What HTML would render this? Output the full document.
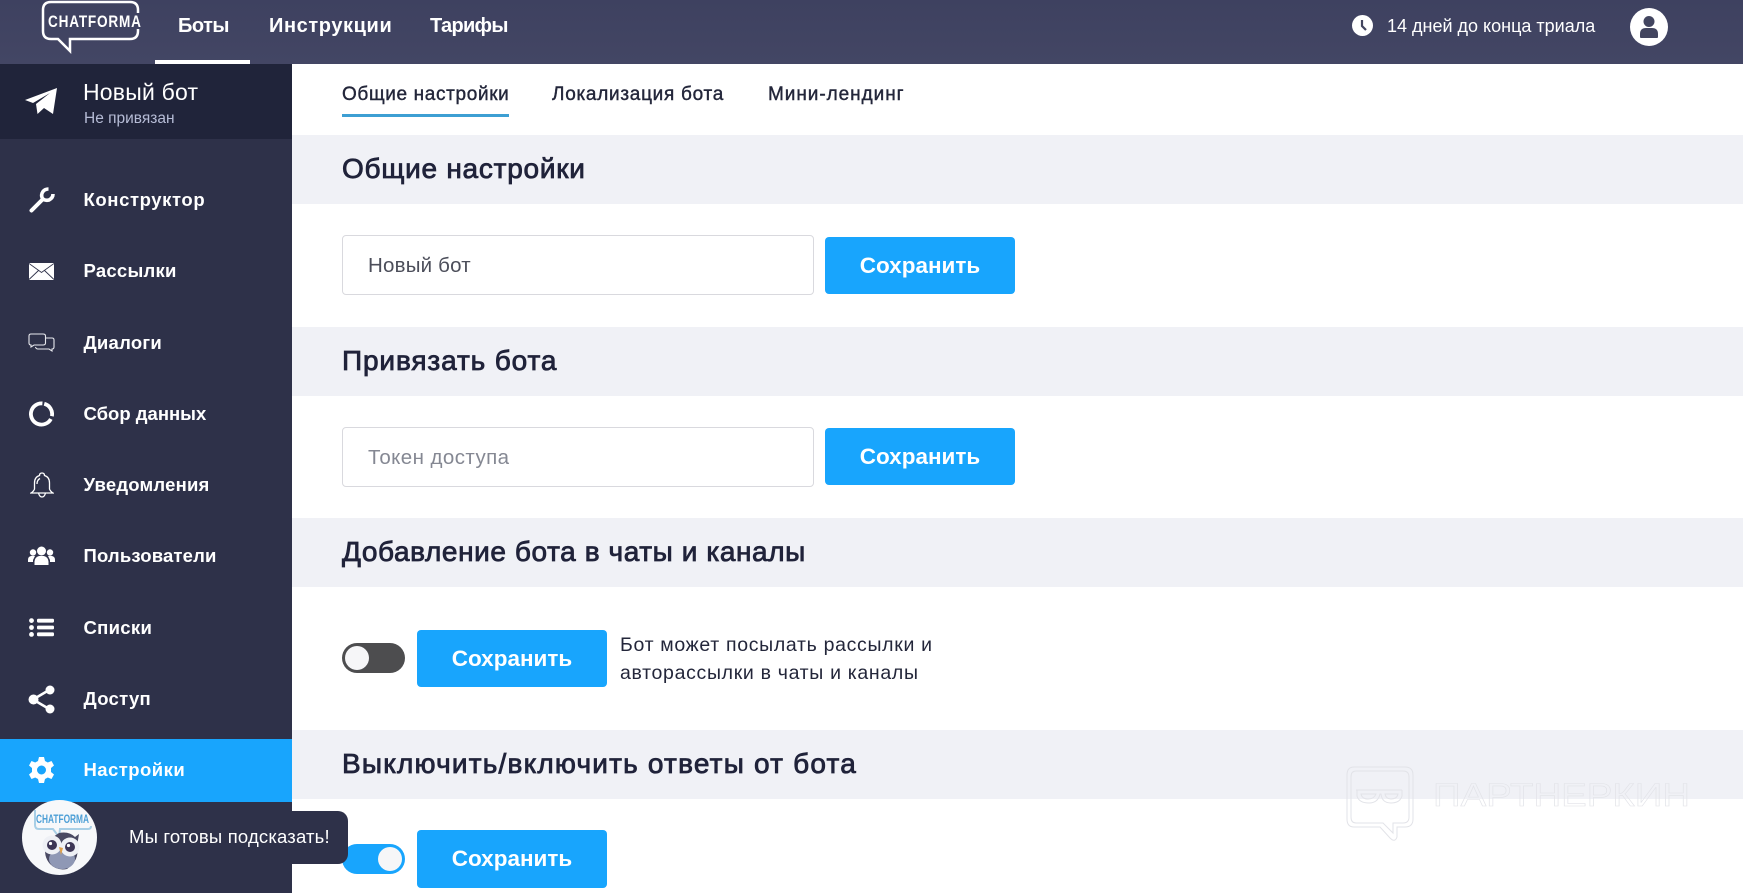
<!DOCTYPE html>
<html lang="ru"><head><meta charset="utf-8"><title>Chatforma</title>
<style>
*{box-sizing:border-box;margin:0;padding:0}
html,body{width:1743px;height:893px;overflow:hidden;background:#fff;font-family:"Liberation Sans",sans-serif}
.a{position:absolute;white-space:nowrap}
.nav{color:#fff;font-weight:700;font-size:20px;line-height:24px;top:14px}
.side{color:#fff;font-weight:700;font-size:18.5px;line-height:24px;left:83.5px}
.tab{color:#23263a;font-size:19px;line-height:22px;top:84px;-webkit-text-stroke:.4px #23263a}
.band{left:292px;width:1451px;height:69px;background:#f0f1f6}
.h{left:342px;color:#20233a;font-size:28px;line-height:32px;-webkit-text-stroke:.8px #20233a}
.inp{left:342px;width:472px;height:60px;background:#fff;border:1px solid #d9d9de;border-radius:4px}
.it{left:368px;font-size:20.5px;line-height:24px}
.btn{background:#18a5fd;border-radius:4px;width:190px;color:#fff;font-weight:700;font-size:22.5px;text-align:center}
.tg{left:342px;width:63px;height:30px;border-radius:15px}
.kn{position:absolute;top:3px;width:24px;height:24px;border-radius:50%;background:#f6f6f8}
</style></head><body>
<div class="a" style="left:0;top:0;width:1743px;height:64px;background:linear-gradient(#3e4160,#434664)"></div>
<svg class="a" style="left:41px;top:0" width="104" height="56" viewBox="0 0 104 56"><path d="M97 13V10Q97 2 89 2H10Q2 2 2 10V31Q2 39 10 39H17L29 51V39H89Q97 39 97 31V29" fill="none" stroke="#fff" stroke-width="2.5"/><text transform="translate(7 27) scale(.8 1)" font-family="Liberation Sans" font-weight="700" font-size="17" fill="#fff" letter-spacing="1">CHATFORMA</text></svg>
<div class="a" style="left:155px;top:60px;width:95px;height:4px;background:#fff"></div>
<div class="a nav" style="left:178px;letter-spacing:-.5px">Боты</div>
<div class="a nav" style="left:269px;letter-spacing:.6px">Инструкции</div>
<div class="a nav" style="left:430px;letter-spacing:-.7px">Тарифы</div>
<svg class="a" style="left:1352px;top:15px" width="21" height="21" viewBox="0 0 21 21"><circle cx="10.5" cy="10.5" r="10.5" fill="#fff"/><path d="M10 5v6l4 4" fill="none" stroke="#42455f" stroke-width="2.2"/></svg>
<div class="a" style="left:1387px;top:15px;color:#fff;font-size:18px;line-height:22px">14 дней до конца триала</div>
<svg class="a" style="left:1630px;top:8px" width="38" height="38" viewBox="0 0 38 38"><circle cx="19" cy="19" r="19" fill="#fff"/><circle cx="19" cy="13.5" r="5.5" fill="#42455f"/><path d="M10 29v-3q0-6 6-6h6q6 0 6 6v3q0 1-1 1H11q-1 0-1-1z" fill="#42455f"/></svg>

<div class="a" style="left:0;top:64px;width:292px;height:829px;background:#2e3149"></div>
<div class="a" style="left:0;top:64px;width:292px;height:75px;background:#20243a"></div>
<svg class="a" style="left:25px;top:88px" width="32" height="28" viewBox="0 0 32 28"><path d="M0 12L32 0L28 26L19 20L12.5 26L11 16L25 5L8 15Z" fill="#fff"/></svg>
<div class="a" style="left:83px;top:78px;color:#fff;font-size:23px;letter-spacing:.2px;line-height:28px">Новый бот</div>
<div class="a" style="left:84px;top:110px;color:#b6bcd6;font-size:15.5px;line-height:18px">Не привязан</div>

<svg class="a" style="left:28px;top:187px" width="27" height="27" viewBox="0 0 27 27" fill="none" stroke="#fff" stroke-linecap="round"><path d="M3.5 23.5L14 13" stroke-width="4"/><path d="M25 7Q25 11 21 13Q17 14 14.5 11.5Q12.5 8 15 4.5Q17 2 20.5 2" stroke-width="3.6" stroke-linecap="butt"/></svg>
<div class="a side" style="top:188px;letter-spacing:.6px">Конструктор</div>
<svg class="a" style="left:29px;top:263px" width="25" height="17" viewBox="0 0 25 17"><rect width="25" height="17" fill="#fff"/><path d="M0 .5L12.5 9.5L25 .5M0 16.5L9.5 7.5M25 16.5L15.5 7.5" fill="none" stroke="#2e3149" stroke-width=".9"/></svg>
<div class="a side" style="top:259px;letter-spacing:.25px">Рассылки</div>
<svg class="a" style="left:28px;top:333px" width="27" height="20" viewBox="0 0 27 20" fill="none" stroke="#e8e9ee" stroke-width="1.1"><path d="M3 1H15Q17.5 1 17.5 3V10Q17.5 12 15 12H6L3 14V12Q1 12 1 10V3Q1 1 3 1Z"/><path d="M18 5H24Q26 5 26 7V14Q26 16 24 16V18L21 16H10Q8 16 7.5 14"/></svg>
<div class="a side" style="top:331px;letter-spacing:.25px">Диалоги</div>
<svg class="a" style="left:29px;top:401px" width="25" height="26" viewBox="0 0 25 26" fill="none" stroke="#fff" stroke-width="3.8"><path d="M15.24 2.76A10.6 10.6 0 0 1 22.87 15.2M21.86 17.98A10.6 10.6 0 1 1 13.42 2.44"/></svg>
<div class="a side" style="top:402px">Сбор данных</div>
<svg class="a" style="left:30px;top:472px" width="24" height="26" viewBox="0 0 24 26" fill="none" stroke="#fff" stroke-width="1.3"><path d="M12 1Q9.5 1 9.5 3.5Q4.5 5 4.5 11V17Q4 19 1 21H23Q20 19 19.5 17V11Q19.5 5 14.5 3.5Q14.5 1 12 1Z"/><path d="M8.5 21Q9.5 25 12 25Q14.5 25 15.5 21"/><path d="M7 12Q7 8 10 6.5"/></svg>
<div class="a side" style="top:473px;letter-spacing:.2px">Уведомления</div>
<svg class="a" style="left:28px;top:546px" width="27" height="19" viewBox="0 0 27 19" fill="#fff"><circle cx="13.5" cy="5" r="4.5"/><path d="M6.5 19V15.5Q7 11 11 10H16Q20 11 20.5 15.5V19Z"/><circle cx="5" cy="6.5" r="3.2"/><path d="M0 16V14Q0 10.5 3 10H7L5 14V16Z"/><circle cx="22" cy="6.5" r="3.2"/><path d="M27 16V14Q27 10.5 24 10H20L22 14V16Z"/></svg>
<div class="a side" style="top:544px;letter-spacing:.15px">Пользователи</div>
<svg class="a" style="left:29px;top:618px" width="25" height="19" viewBox="0 0 25 19" fill="#fff"><circle cx="2.5" cy="2.6" r="2.4"/><circle cx="2.5" cy="9.5" r="2.4"/><circle cx="2.5" cy="16.4" r="2.4"/><rect x="8" y=".8" width="17" height="3.8" rx="1.2"/><rect x="8" y="7.6" width="17" height="3.8" rx="1.2"/><rect x="8" y="14.4" width="17" height="3.8" rx="1.2"/></svg>
<div class="a side" style="top:616px;letter-spacing:.3px">Списки</div>
<svg class="a" style="left:28px;top:685px" width="27" height="29" viewBox="0 0 27 29" fill="#fff"><path d="M5 14.5L22 4.5M5 14.5L22 24.5" stroke="#fff" stroke-width="2.6"/><circle cx="5.5" cy="14.5" r="5"/><circle cx="22" cy="5" r="4.5"/><circle cx="22" cy="24" r="4.5"/></svg>
<div class="a side" style="top:687px;letter-spacing:.3px">Доступ</div>
<div class="a" style="left:0;top:739px;width:292px;height:63px;background:#18a5fd"></div>
<svg class="a" style="left:29px;top:757px" width="25" height="26" viewBox="0 0 25 26"><path fill="#fff" fill-rule="evenodd" d="M10 0H15L16 4L18.8 5.5L22.5 4L25 8.5L22 11V15L25 17.5L22.5 22L18.8 20.5L16 22L15 26H10L9 22L6.2 20.5L2.5 22L0 17.5L3 15V11L0 8.5L2.5 4L6.2 5.5L9 4ZM12.5 8.5A4.5 4.5 0 1 0 12.5 17.5A4.5 4.5 0 1 0 12.5 8.5Z"/></svg>
<div class="a side" style="top:758px;letter-spacing:.45px">Настройки</div>

<div class="a tab" style="left:342px;letter-spacing:.65px">Общие настройки</div>
<div class="a" style="left:342px;top:114px;width:167px;height:3px;background:#3d9fd3"></div>
<div class="a tab" style="left:552px;letter-spacing:.72px">Локализация бота</div>
<div class="a tab" style="left:768px;letter-spacing:.95px">Мини-лендинг</div>

<div class="a band" style="top:135px"></div>
<div class="a h" style="top:153px;letter-spacing:.75px">Общие настройки</div>
<div class="a inp" style="top:235px"></div>
<div class="a it" style="top:254px;color:#4c4e5a;letter-spacing:.2px">Новый бот</div>
<div class="a btn" style="left:825px;top:237px;height:57px;line-height:57px">Сохранить</div>

<div class="a band" style="top:327px"></div>
<div class="a h" style="top:345px;letter-spacing:.87px">Привязать бота</div>
<div class="a inp" style="top:427px"></div>
<div class="a it" style="top:446px;color:#858893;letter-spacing:.43px">Токен доступа</div>
<div class="a btn" style="left:825px;top:428px;height:57px;line-height:57px">Сохранить</div>

<div class="a band" style="top:518px"></div>
<div class="a h" style="top:536px;letter-spacing:.59px">Добавление бота в чаты и каналы</div>
<div class="a tg" style="top:643px;background:#4d4d4f"><div class="kn" style="left:3px"></div></div>
<div class="a btn" style="left:417px;top:630px;height:57px;line-height:57px">Сохранить</div>
<div class="a" style="left:620px;top:631px;color:#23263a;font-size:19.5px;letter-spacing:.68px;line-height:28px">Бот может посылать рассылки и<br>авторассылки в чаты и каналы</div>

<div class="a band" style="top:730px"></div>
<div class="a h" style="top:748px;letter-spacing:1.2px">Выключить/включить ответы от бота</div>
<div class="a tg" style="top:844px;background:#18a5fd"><div class="kn" style="left:36px"></div></div>
<div class="a btn" style="left:417px;top:830px;height:58px;line-height:58px">Сохранить</div>

<svg class="a" style="left:1345px;top:765px" width="350" height="78" viewBox="0 0 350 78" fill="none" stroke="#e2e3e8" stroke-width="1"><path d="M9 2H60Q68 2 68 10V54Q68 62 60 62H52L52 72Q50 78 45 73L35 62H9Q2 62 2 54V10Q2 2 9 2Z"/><path d="M11 6H58Q64 6 64 12V52Q64 58 58 58H48V68L38 58H11Q6 58 6 52V12Q6 6 11 6Z"/><path d="M11 25H57M12 25V31Q14 38 24 38Q33 38 35 29H36Q37 38 46 38Q55 38 57 31V25M16 29H31Q29 34 23 34Q17 34 16 29ZM40 29H53Q52 34 46 34Q41 34 40 29Z"/><text x="88" y="41" font-family="Liberation Sans" font-size="32" textLength="257" lengthAdjust="spacingAndGlyphs" stroke-width=".6">ПАРТНЕРКИН</text></svg>

<div class="a" style="left:60px;top:811px;width:288px;height:53px;background:#2e3149;border-radius:0 10px 10px 0"></div>
<div class="a" style="left:129px;top:826px;color:#fff;font-size:18.5px;letter-spacing:.18px;line-height:22px">Мы готовы подсказать!</div>
<svg class="a" style="left:22px;top:800px" width="75" height="75" viewBox="0 0 75 75"><circle cx="37.5" cy="37.5" r="37.5" fill="#f7f8fa"/>
<path d="M13 10V25Q13 29 17 29H31L37 37L38 29H66Q69 29 69 26" fill="none" stroke="#a8cfe6" stroke-width="2"/>
<text x="14" y="23" font-family="Liberation Sans" font-weight="700" font-size="11.5" fill="#4d9fd6" textLength="53" lengthAdjust="spacingAndGlyphs">CHATFORMA</text>
<path d="M31 37L37 33Q47 31 53 37L57 34L55 46Q58 60 45 69Q35 71 28 64Q21 56 24 45Z" fill="#4a4a63"/>
<ellipse cx="40" cy="59" rx="13" ry="10" fill="#8f98b5"/>
<circle cx="30" cy="45" r="9.5" fill="#eef0f5"/><circle cx="48" cy="47" r="9.5" fill="#eef0f5"/>
<circle cx="30" cy="45" r="5" fill="#3c3555"/><circle cx="48" cy="47" r="5" fill="#3c3555"/>
<circle cx="28.5" cy="43.5" r="1.6" fill="#fff"/><circle cx="46.5" cy="45.5" r="1.6" fill="#fff"/>
<path d="M37 47L41 48L39 55Z" fill="#e0a14a"/></svg>
</body></html>
